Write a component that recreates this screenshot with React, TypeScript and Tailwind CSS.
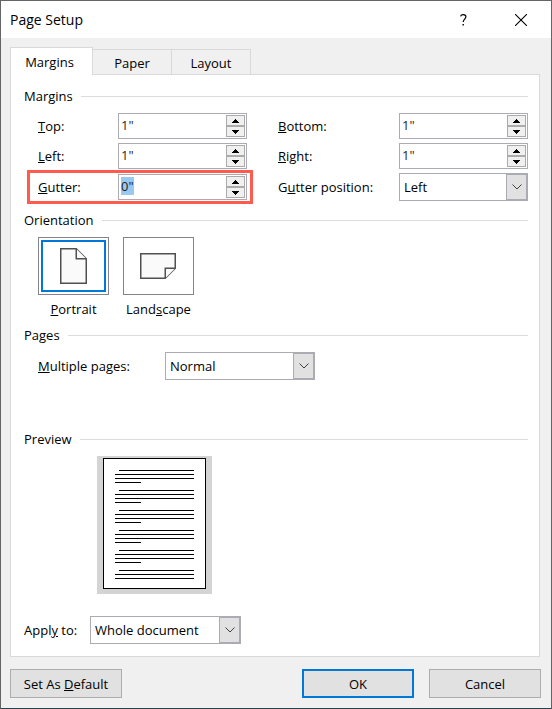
import { useEffect, useRef, useState } from "react";
import type { ReactNode, Ref } from "react";

type Orientation = "portrait" | "landscape";

function GroupHeader({ title }: { title: string }) {
  return (
    <div className="flex h-5 items-center gap-2">
      <h2>{title}</h2>
      <div className="h-px flex-1 bg-[#dcdcdc]" />
    </div>
  );
}

function SpinButton({ label, up = false }: { label: string; up?: boolean }) {
  return (
    <button
      type="button"
      aria-label={label}
      className="flex flex-1 items-center justify-center border border-[#ababab] bg-[#f0f0f0]"
    >
      <svg width="7" height="4" viewBox="0 0 7 4" shapeRendering="crispEdges">
        <path d={up ? "M3 0h1v1h1v1h1v1h1v1H0V3h1V2h1V1h1z" : "M0 0h7v1H6v1H5v1H4v1H3V3H2V2H1V1H0z"} />
      </svg>
    </button>
  );
}

function Spinner({ id, value, inputRef }: { id: string; value: string; inputRef?: Ref<HTMLInputElement> }) {
  return (
    <div className="flex h-[26px] w-[129px] border border-[#ababb3] bg-white p-px">
      <input
        ref={inputRef}
        id={id}
        type="text"
        defaultValue={value}
        className="mt-px h-[18px] min-w-0 flex-1 pl-px leading-[18px] text-[#1f1f1f] caret-transparent outline-none selection:bg-[#99c9ef] selection:text-[#1f1f1f]"
      />
      <div className="flex w-[19px] flex-col">
        <SpinButton up label="Increase" />
        <SpinButton label="Decrease" />
      </div>
    </div>
  );
}

function Dropdown({ id, options, className }: { id: string; options: string[]; className: string }) {
  return (
    <div className={`relative h-7 ${className}`}>
      <select
        id={id}
        className="h-full w-full appearance-none border border-[#ababb3] bg-white pl-1 text-black outline-none"
      >
        {options.map((option) => (
          <option key={option}>{option}</option>
        ))}
      </select>
      <div className="pointer-events-none absolute inset-y-px right-px flex w-[21px] items-center justify-center border border-[#ababb3] bg-[#e1e1e1]">
        <svg width="10" height="6" viewBox="0 0 10 6" fill="none" stroke="#404040">
          <path d="M.5.5 5 5 9.5.5" />
        </svg>
      </div>
    </div>
  );
}

function OrientationOption({
  value,
  selected,
  onSelect,
  icon,
  children,
}: {
  value: Orientation;
  selected: boolean;
  onSelect: (value: Orientation) => void;
  icon: ReactNode;
  children: ReactNode;
}) {
  return (
    <label className="flex w-[71px] flex-col items-center gap-1">
      <input
        type="radio"
        name="orientation"
        className="sr-only"
        checked={selected}
        onChange={() => onSelect(value)}
      />
      <span className="h-[58px] w-full border border-[#838390] bg-white p-[2px]">
        <span
          className={`flex h-full items-center justify-center border-2 pr-px ${
            selected ? "border-[#0078d7]" : "border-transparent"
          }`}
        >
          {icon}
        </span>
      </span>
      <span className="h-5 leading-5">{children}</span>
    </label>
  );
}

const tabs = ["Margins", "Paper", "Layout"];

export default function App() {
  const [activeTab, setActiveTab] = useState("Margins");
  const [orientation, setOrientation] = useState<Orientation>("portrait");
  const gutterRef = useRef<HTMLInputElement>(null);

  useEffect(() => {
    gutterRef.current?.focus();
    gutterRef.current?.select();
  }, []);

  return (
    <div className="border border-[#656565] border-b-[#28444f] bg-[#f0f0f0] font-['Open_Sans','Noto_Sans',sans-serif] text-[13px] leading-5 text-black">
      <header className="flex h-[37px] items-center bg-white pr-6 pl-[9px]">
        <h1 className="flex-1 text-sm">Page Setup</h1>
        <button type="button" aria-label="Help" className="mr-12 flex">
          <svg width="7" height="12" viewBox="0 0 7 12" fill="none" stroke="#000" strokeWidth="1.2">
            <path d="M.6 2.400C.8 1.300 1.800.6 3.200.6c1.600 0 2.700.8 2.700 2.200 0 2.200-2.700 2.500-2.700 5.200" />
            <path d="M3.200 10v1.600" strokeWidth="1.400" />
          </svg>
        </button>
        <button type="button" aria-label="Close" className="flex">
          <svg width="12" height="12" viewBox="0 0 12 12" stroke="#000" strokeWidth="1.100">
            <path d="m0 0 12 12m0-12-12 12" />
          </svg>
        </button>
      </header>

      <main className="pt-[9px] pr-[11px] pl-[9px]">
        <div role="tablist" className="flex items-end">
          {tabs.map((tab) => (
            <button
              key={tab}
              type="button"
              role="tab"
              aria-selected={activeTab === tab}
              onClick={() => setActiveTab(tab)}
              className={
                activeTab === tab
                  ? "relative -mb-px h-7 w-[83px] border border-b-0 border-[#d9d9d9] bg-white pr-1"
                  : "h-[25px] w-[79px] border border-b-0 border-l-0 border-[#d9d9d9] bg-[#f0f0f0] pt-px"
              }
            >
              {tab}
            </button>
          ))}
        </div>

        <div className="border border-[#d9d9d9] bg-white pt-[11px] pr-[11px] pb-3 pl-[13px]">
          <GroupHeader title="Margins" />
          <div className="mt-[7px] grid grid-cols-[80px_129px_1fr_129px] items-center gap-y-1 pl-[14px]">
            <label htmlFor="top">
              <u>T</u>op:
            </label>
            <Spinner id="top" value={'1"'} />
            <label htmlFor="bottom" className="pl-[31px]">
              <u>B</u>ottom:
            </label>
            <Spinner id="bottom" value={'1"'} />

            <label htmlFor="left">
              <u>L</u>eft:
            </label>
            <Spinner id="left" value={'1"'} />
            <label htmlFor="right" className="pl-[31px]">
              <u>R</u>ight:
            </label>
            <Spinner id="right" value={'1"'} />

            <div className="relative col-span-2 flex h-7 items-center">
              <label htmlFor="gutter" className="w-20">
                <u>G</u>utter:
              </label>
              <Spinner id="gutter" value={'0"'} inputRef={gutterRef} />
              <div className="pointer-events-none absolute -inset-y-[3px] -right-[6px] -left-[11px] border-3 border-[#fe5b4f]" />
            </div>
            <label htmlFor="gutter-position" className="pl-[31px]">
              G<u>u</u>tter position:
            </label>
            <Dropdown id="gutter-position" options={["Left", "Top"]} className="w-[129px]" />
          </div>

          <div className="mt-[9px]">
            <GroupHeader title="Orientation" />
          </div>
          <div className="mt-[7px] flex gap-[14px] pl-[14px]">
            <OrientationOption
              value="portrait"
              selected={orientation === "portrait"}
              onSelect={setOrientation}
              icon={
                <svg width="27" height="36" viewBox="0 0 27 36" fill="#fafafa" stroke="#505050" strokeWidth="1.500">
                  <path d="M.75.75h15.500l10 10v24.500H.75z" />
                  <path d="M16.250.75v10h10" />
                </svg>
              }
            >
              <u>P</u>ortrait
            </OrientationOption>
            <OrientationOption
              value="landscape"
              selected={orientation === "landscape"}
              onSelect={setOrientation}
              icon={
                <svg width="36" height="26" viewBox="0 0 36 26" fill="#fafafa" stroke="#505050" strokeWidth="1.500">
                  <path d="M.75.75h34.500v14.500l-10 10H.75z" />
                  <path d="M25.250 25.250v-10h10" />
                </svg>
              }
            >
              Land<u>s</u>cape
            </OrientationOption>
          </div>

          <div className="mt-[6px]">
            <GroupHeader title="Pages" />
          </div>
          <div className="mt-[7px] flex items-center pl-[14px]">
            <label htmlFor="multiple-pages" className="w-[127px]">
              <u>M</u>ultiple pages:
            </label>
            <Dropdown
              id="multiple-pages"
              options={["Normal", "Mirror margins", "2 pages per sheet", "Book fold"]}
              className="w-[150px]"
            />
          </div>

          <div className="mt-[49px]">
            <GroupHeader title="Preview" />
          </div>
          <div className="mt-[7px] ml-[73px] w-[115px] bg-[#d4d4d4] px-[6px] pt-[2px] pb-[5px]">
            <svg
              className="block"
              width="103"
              height="131"
              viewBox="0 0 103 131"
              fill="#fff"
              stroke="#000"
              shapeRendering="crispEdges"
            >
              <path d="M.5.5h102v130H.5z" />
              {[12, 32, 52, 72, 92, 112].map((y) => (
                <path key={y} d={`M16 ${y + 0.5}h75M12 ${y + 4.5}h79M12 ${y + 8.5}h79${y < 112 ? `M12 ${y + 12.5}h26` : ""}`} />
              ))}
            </svg>
          </div>

          <div className="mt-[22px] flex items-center">
            <label htmlFor="apply-to" className="w-[66px]">
              Appl<u>y</u> to:
            </label>
            <Dropdown
              id="apply-to"
              options={["Whole document", "This point forward"]}
              className="w-[151px]"
            />
          </div>
        </div>
      </main>

      <footer className="flex gap-[15px] pt-3 pr-[10px] pb-[10px] pl-[9px]">
        <button type="button" className="mr-auto h-[29px] w-28 border border-[#adadad] bg-[#e1e1e1]">
          Set As <u>D</u>efault
        </button>
        <button type="button" className="h-[29px] w-28 border-2 border-[#0078d7] bg-[#e1e1e1]">
          OK
        </button>
        <button type="button" className="h-[29px] w-28 border border-[#adadad] bg-[#e1e1e1]">
          Cancel
        </button>
      </footer>
    </div>
  );
}
